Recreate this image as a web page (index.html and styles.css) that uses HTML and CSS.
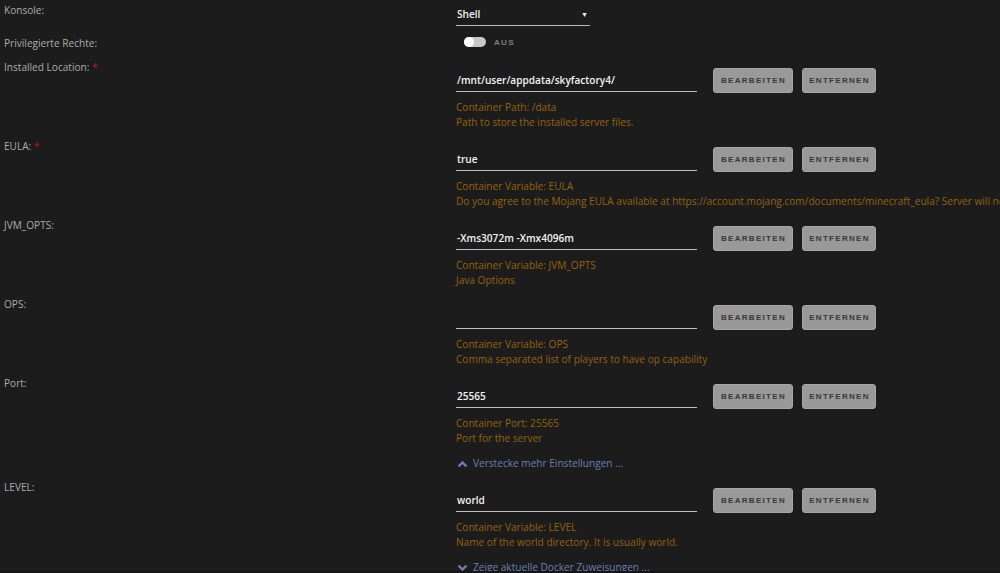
FILE: index.html
```html
<!DOCTYPE html>
<html lang="de">

<head>
    <meta charset="UTF-8">
    <meta name="viewport" content="width=device-width, initial-scale=1.0">
    <title>Container bearbeiten</title>
    <link rel="stylesheet" href="styles.css">
</head>

<body>
    <div class="form">
        <div class="row row-console">
            <div class="label">Konsole:</div>
            <div class="field">
                <div class="select">
                    <span>Shell</span>
                    <span class="arrow">&#9660;</span>
                </div>
            </div>
        </div>

        <div class="row row-priv">
            <div class="label">Privilegierte Rechte:</div>
            <div class="field">
                <div class="switch">
                    <span class="track"><span class="knob"></span></span>
                    <span class="switch-text">AUS</span>
                </div>
            </div>
        </div>

        <div class="row">
            <div class="label">Installed Location: <span class="req">*</span></div>
            <div class="field">
                <div class="controls">
                    <div class="input">/mnt/user/appdata/skyfactory4/</div>
                    <button class="btn">BEARBEITEN</button>
                    <button class="btn btn-small">ENTFERNEN</button>
                </div>
                <div class="desc">
                    Container Path: /data<br>
                    Path to store the installed server files.
                </div>
            </div>
        </div>

        <div class="row">
            <div class="label">EULA: <span class="req">*</span></div>
            <div class="field">
                <div class="controls">
                    <div class="input">true</div>
                    <button class="btn">BEARBEITEN</button>
                    <button class="btn btn-small">ENTFERNEN</button>
                </div>
                <div class="desc">
                    Container Variable: EULA<br>
                    Do you agree to the Mojang EULA available at https://account.mojang.com/documents/minecraft_eula? Server will not start unless set to true.
                </div>
            </div>
        </div>

        <div class="row">
            <div class="label">JVM_OPTS:</div>
            <div class="field">
                <div class="controls">
                    <div class="input">-Xms3072m -Xmx4096m</div>
                    <button class="btn">BEARBEITEN</button>
                    <button class="btn btn-small">ENTFERNEN</button>
                </div>
                <div class="desc">
                    Container Variable: JVM_OPTS<br>
                    Java Options
                </div>
            </div>
        </div>

        <div class="row">
            <div class="label">OPS:</div>
            <div class="field">
                <div class="controls">
                    <div class="input"></div>
                    <button class="btn">BEARBEITEN</button>
                    <button class="btn btn-small">ENTFERNEN</button>
                </div>
                <div class="desc">
                    Container Variable: OPS<br>
                    Comma separated list of players to have op capability
                </div>
            </div>
        </div>

        <div class="row">
            <div class="label">Port:</div>
            <div class="field">
                <div class="controls">
                    <div class="input">25565</div>
                    <button class="btn">BEARBEITEN</button>
                    <button class="btn btn-small">ENTFERNEN</button>
                </div>
                <div class="desc">
                    Container Port: 25565<br>
                    Port for the server
                </div>
            </div>
        </div>

        <div class="toggle-link">
            <svg width="11" height="8" viewBox="0 0 11 8"><path d="M1.5 6.5 L5.5 2.5 L9.5 6.5" fill="none" stroke="currentColor" stroke-width="2.4"/></svg>
            Verstecke mehr Einstellungen ...
        </div>

        <div class="row">
            <div class="label">LEVEL:</div>
            <div class="field">
                <div class="controls">
                    <div class="input">world</div>
                    <button class="btn">BEARBEITEN</button>
                    <button class="btn btn-small">ENTFERNEN</button>
                </div>
                <div class="desc">
                    Container Variable: LEVEL<br>
                    Name of the world directory. It is usually world.
                </div>
            </div>
        </div>

        <div class="toggle-link">
            <svg width="11" height="8" viewBox="0 0 11 8"><path d="M1.5 1.5 L5.5 5.5 L9.5 1.5" fill="none" stroke="currentColor" stroke-width="2.4"/></svg>
            Zeige aktuelle Docker Zuweisungen ...
        </div>
    </div>
</body>

</html>
```

FILE: styles.css
```css
html,
body {
    margin: 0;
    height: 100%;
    overflow: hidden;
}

body {
    background: #1c1c1c;
    color: #ababab;
    font-family: "Open Sans", "Noto Sans", sans-serif;
    font-size: 10.1px;
    line-height: 15px;
    border-bottom: 2px solid #151515;
    box-sizing: border-box;
}

.form {
    padding-top: 3px;
}

.row {
    display: grid;
    grid-template-columns: 456px 1fr;
    padding-bottom: 9px;
}

.label {
    padding-left: 4px;
}

.req {
    color: #c3141b;
}

.field {
    padding-top: 8px;
    min-width: 0;
}

.row-console {
    padding-bottom: 10px;
}

.row-console .field,
.row-priv .field {
    padding-top: 0;
}

.row-priv {
    padding-bottom: 9px;
}

/* select */
.select {
    width: 134px;
    height: 23px;
    border-bottom: 1px solid #b8b8b8;
    display: flex;
    align-items: center;
    justify-content: space-between;
    color: #f0f0f0;
    font-weight: 600;
    padding-left: 1px;
    box-sizing: border-box;
}

.select .arrow {
    font-size: 7px;
    padding-right: 2px;
}

/* switch */
.switch {
    display: flex;
    align-items: center;
    padding-left: 8px;
    height: 12px;
}

.track {
    width: 22px;
    height: 10px;
    border-radius: 5px;
    background: #c8c8c8;
    display: flex;
    align-items: center;
}

.knob {
    width: 10px;
    height: 10px;
    border-radius: 5px;
    background: #fff;
}

.switch-text {
    margin-left: 8px;
    font-family: "Liberation Sans", sans-serif;
    font-size: 8px;
    font-weight: bold;
    letter-spacing: 1.3px;
    color: #7c7c7c;
}

/* input + buttons */
.controls {
    display: flex;
    align-items: flex-start;
    height: 25px;
}

.input {
    width: 241px;
    height: 24px;
    box-sizing: border-box;
    border-bottom: 1px solid #bdbdbd;
    padding: 5px 0 0 1px;
    color: #f2f2f2;
    font-weight: 600;
    margin-right: 16px;
}

.btn {
    height: 25px;
    width: 80px;
    padding: 0 0 0 1px;
    border: 1px solid #a6a6a6;
    border-radius: 3px;
    background: #999;
    color: #383838;
    font-family: "Liberation Sans", sans-serif;
    font-size: 8px;
    font-weight: bold;
    letter-spacing: 1.3px;
    margin-right: 9px;
}

.btn-small {
    width: 74px;
}

.desc {
    margin-top: 7px;
    color: #94620c;
    white-space: nowrap;
}

.toggle-link {
    display: flex;
    align-items: center;
    gap: 5px;
    margin: 1px 0 9px 457px;
    color: #6b7fb0;
}
```
